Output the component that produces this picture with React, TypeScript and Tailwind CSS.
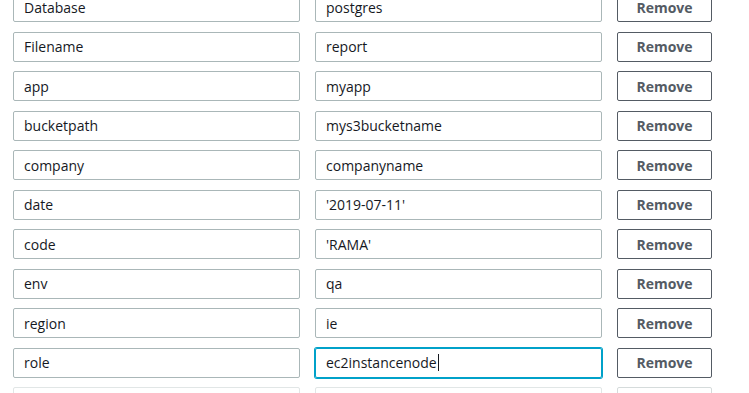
const rows = [
  { key: "Database", value: "postgres" },
  { key: "Filename", value: "report" },
  { key: "app", value: "myapp" },
  { key: "bucketpath", value: "mys3bucketname" },
  { key: "company", value: "companyname" },
  { key: "date", value: "'2019-07-11'" },
  { key: "code", value: "'RAMA'" },
  { key: "env", value: "qa" },
  { key: "region", value: "ie" },
  { key: "role", value: "ec2instancenode", focused: true },
  { key: "", value: "", faded: true },
];

export default function App() {
  return (
    <div
      className="h-[393px] w-[749px] overflow-hidden bg-white text-[14px] text-[#16191f]"
      style={{ fontFamily: '"Open Sans", "Noto Sans", sans-serif' }}
    >
      <div className="-mt-[8px] flex flex-col gap-[9.5px] pl-[13px]">
        {rows.map((row, i) => (
          <div key={i} className="flex items-center gap-[15px]">
            <div
              className={`flex h-[30px] w-[287px] items-center rounded-[2px] border px-[10px] ${
                row.faded ? "border-[#e1e6e6]" : "border-[#aab7b8]"
              }`}
            >
              {row.key}
            </div>
            <div
              className={`flex h-[30px] w-[287px] items-center rounded-[2px] border px-[10px] ${
                row.focused
                  ? "border-[#00a1c9] shadow-[0_0_0_1px_#00a1c9]"
                  : row.faded
                  ? "border-[#e1e6e6]"
                  : "border-[#aab7b8]"
              }`}
            >
              {row.value}
              {row.focused && <span className="ml-px inline-block h-[17px] w-px bg-[#16191f]" />}
            </div>
            <button
              className={`flex h-[30px] w-[95px] items-center justify-center rounded-[2px] border bg-white font-bold ${
                row.faded
                  ? "border-[#d5dbdb] text-[#aab7b8]"
                  : "border-[#545b64] text-[#545b64]"
              }`}
            >
              Remove
            </button>
          </div>
        ))}
      </div>
    </div>
  );
}
